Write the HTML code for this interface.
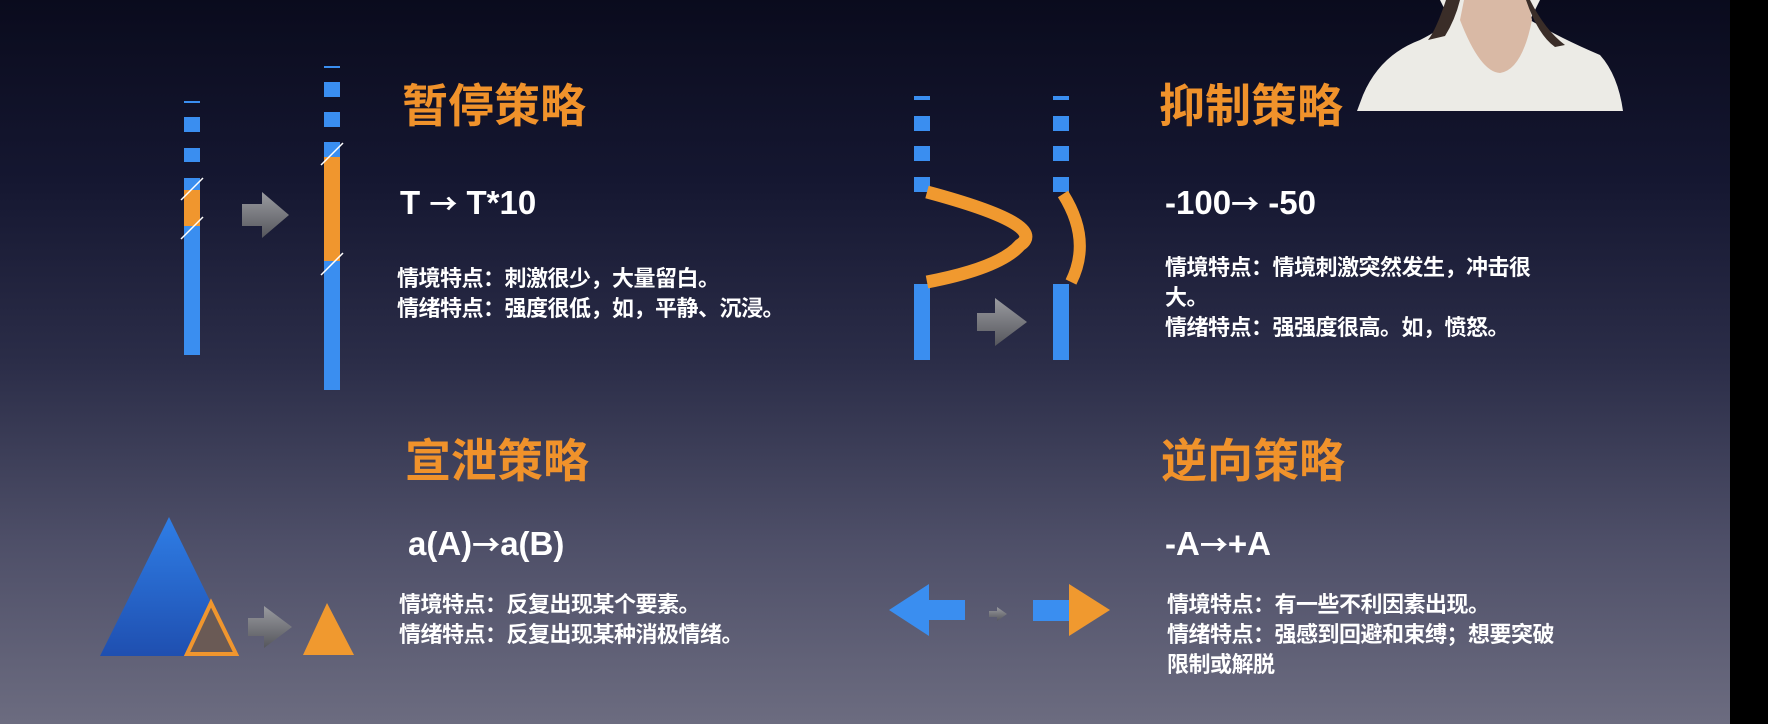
<!DOCTYPE html>
<html><head><meta charset="utf-8"><style>
html,body{margin:0;padding:0}
body{width:1768px;height:724px;position:relative;overflow:hidden;
background:linear-gradient(180deg,#0a0b1d 0%,#151731 25%,#2b2d48 50%,#4e4f68 75%,#6c6c80 100%);
font-family:"Liberation Sans","Noto Sans CJK SC",sans-serif;color:#fff}
.t{position:absolute;font-weight:bold;color:#f0922b;font-size:46px;letter-spacing:0px;white-space:nowrap;line-height:1}
.f{position:absolute;font-weight:bold;color:#fff;font-size:33px;white-space:nowrap;line-height:1}
.f span{font-family:"Noto Sans CJK SC",sans-serif;font-size:28px}
.d{position:absolute;font-size:22px;line-height:30px;color:#fff;white-space:nowrap;font-weight:bold;letter-spacing:-0.5px}
</style></head><body>
<svg width="1768" height="724" style="position:absolute;left:0;top:0">
<defs>
<linearGradient id="ga" x1="0" y1="0" x2="0" y2="1"><stop offset="0" stop-color="#9a9ba0"/><stop offset="1" stop-color="#55565c"/></linearGradient>
<linearGradient id="gb" x1="0" y1="0" x2="0" y2="1"><stop offset="0" stop-color="#2f7ee6"/><stop offset="1" stop-color="#1f4fb0"/></linearGradient>
</defs>
<g fill="#3a8ef0">
<rect x="184" y="101" width="16" height="2"/>
<rect x="184" y="117" width="16" height="15"/>
<rect x="184" y="148" width="16" height="14"/>
<rect x="184" y="178" width="16" height="177"/>
<rect x="324" y="66" width="16" height="2"/>
<rect x="324" y="82" width="16" height="15"/>
<rect x="324" y="112" width="16" height="15"/>
<rect x="324" y="142" width="16" height="248"/>
</g>
<rect x="184" y="190" width="16" height="36" fill="#f0962e"/>
<rect x="324" y="157" width="16" height="104" fill="#f0962e"/>
<g stroke="#fff" stroke-width="1.5">
<line x1="181" y1="200" x2="203" y2="178"/><line x1="181" y1="239" x2="203" y2="217"/>
<line x1="321" y1="165" x2="343" y2="143"/><line x1="321" y1="275" x2="343" y2="253"/>
</g>
<path d="M242 204 H262 V192 L289 215 L262 238 V226 H242Z" fill="url(#ga)"/>
<g fill="#3a8ef0">
<rect x="914" y="96" width="16" height="4"/><rect x="914" y="116" width="16" height="15"/><rect x="914" y="146" width="16" height="15"/><rect x="914" y="177" width="16" height="15"/><rect x="914" y="284" width="16" height="76"/>
<rect x="1053" y="96" width="16" height="4"/><rect x="1053" y="116" width="16" height="15"/><rect x="1053" y="146" width="16" height="15"/><rect x="1053" y="177" width="16" height="15"/><rect x="1053" y="284" width="16" height="76"/>
</g>
<path d="M927 192 Q1050 225 1020 245 Q1000 268 927 282" fill="none" stroke="#f0992f" stroke-width="13"/>
<path d="M1063 194 Q1092 240 1071 282" fill="none" stroke="#f0992f" stroke-width="12"/>
<path d="M977 313 H995 V298 L1027 322 L995 346 V331 H977Z" fill="url(#ga)"/>
<polygon points="169,517 100,656 237,656" fill="url(#gb)"/>
<polygon points="211,603 187,654 236,654" fill="#6a5a55" stroke="#f0962e" stroke-width="4"/>
<path d="M248 618 H264 V606 L292 627 L264 648 V636 H248Z" fill="url(#ga)"/>
<polygon points="327,603 303,655 354,655" fill="#f0992f"/>
<path d="M889 610 L929 584 V600 H965 V620 H929 V636Z" fill="#3a8ef0"/>
<path d="M989 611 H997 V607 L1007 614 L997 621 V617 H989Z" fill="url(#ga)"/>
<rect x="1033" y="600" width="37" height="21" fill="#3a8ef0"/>
<polygon points="1069,584 1110,610 1069,636" fill="#f0992f"/>
<rect x="1730" y="0" width="38" height="724" fill="#000"/>
<path d="M1357 111 L1363 95 Q1380 55 1420 40 Q1440 30 1450 20 L1440 0 L1540 0 L1530 20 Q1560 38 1600 55 Q1618 75 1623 111Z" fill="#ecebe6"/>
<path d="M1460 20 Q1480 72 1500 73 Q1522 70 1532 20 L1528 0 H1464Z" fill="#d9b9a5"/>
<path d="M1446 0 Q1436 30 1428 40 L1445 36 Q1455 20 1460 0Z M1530 0 Q1545 30 1565 45 L1555 47 Q1538 35 1526 0Z" fill="#3a2d28"/>
</svg>
<div class="t" style="left:402px;top:83px">暂停策略</div>
<div class="t" style="left:1159px;top:83px">抑制策略</div>
<div class="t" style="left:405px;top:438px">宣泄策略</div>
<div class="t" style="left:1161px;top:438px">逆向策略</div>
<div class="f" style="left:400px;top:186px">T <span>→</span> T*10</div>
<div class="f" style="left:1165px;top:186px">-100<span>→</span> -50</div>
<div class="f" style="left:408px;top:527px">a(A)<span>→</span>a(B)</div>
<div class="f" style="left:1165px;top:527px">-A<span>→</span>+A</div>
<div class="d" style="left:397px;top:264px">情境特点：刺激很少，大量留白。<br>情绪特点：强度很低，如，平静、沉浸。</div>
<div class="d" style="left:1165px;top:253px">情境特点：情境刺激突然发生，冲击很<br>大。<br>情绪特点：强强度很高。如，愤怒。</div>
<div class="d" style="left:399px;top:590px">情境特点：反复出现某个要素。<br>情绪特点：反复出现某种消极情绪。</div>
<div class="d" style="left:1167px;top:590px">情境特点：有一些不利因素出现。<br>情绪特点：强感到回避和束缚；想要突破<br>限制或解脱</div>
</body></html>
